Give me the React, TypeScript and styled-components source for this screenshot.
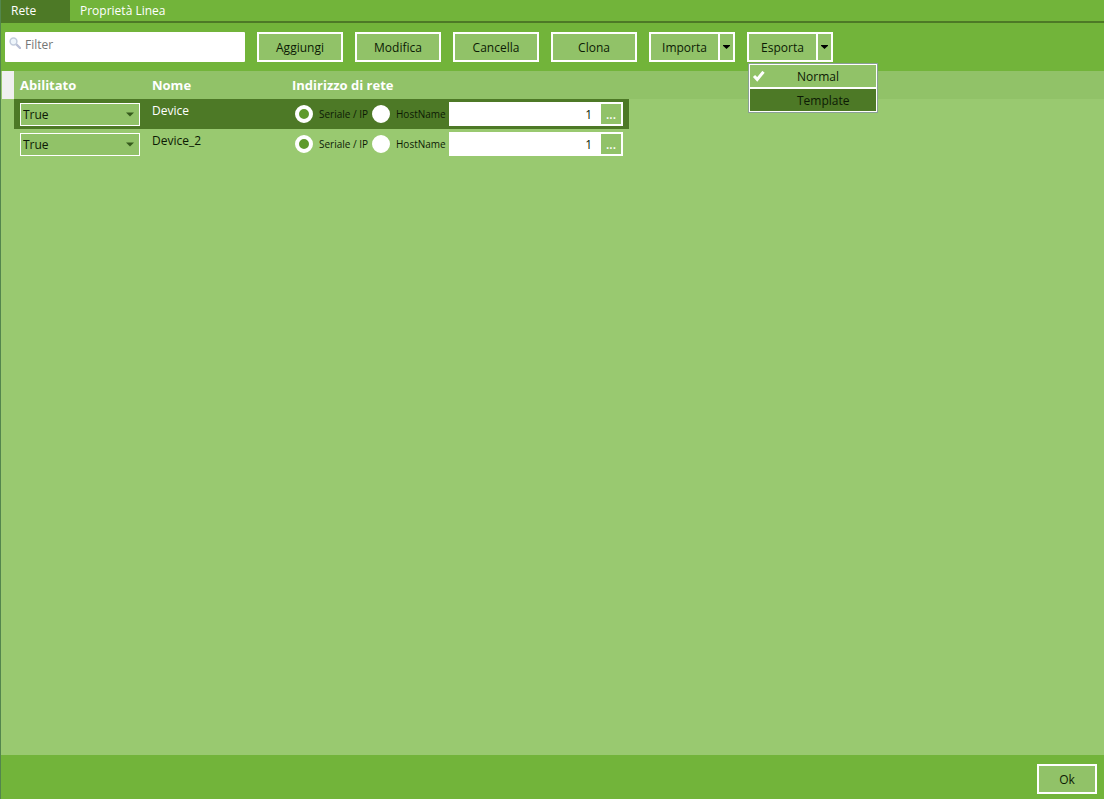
import React, { useState } from "react";
import styled, { createGlobalStyle, css } from "styled-components";

const color = {
  bar: "#72b43a",
  panel: "#99c970",
  control: "#91c268",
  dark: "#4d7926",
  ink: "#0c1a04",
  edge: "#53864d",
};

const GlobalStyle = createGlobalStyle`
  *, *::before, *::after { box-sizing: border-box; }
  html, body, #root { height: 100%; }
  body { margin: 0; }
  body, button, input, select {
    font-family: "Open Sans", "Noto Sans", sans-serif;
    font-size: 12px;
    line-height: 16px;
    color: ${color.ink};
  }
`;

const Window = styled.div`
  display: flex;
  flex-direction: column;
  min-height: 100%;
  border-left: 1px solid ${color.edge};
  background: ${color.panel};
`;

const Tabs = styled.nav`
  display: flex;
  height: 23px;
  background: ${color.bar};
  border-bottom: 2px solid ${color.dark};
`;

const Tab = styled.button<{ $active?: boolean }>`
  border: 0;
  padding: 0 10px;
  min-width: ${(p) => (p.$active ? "69px" : "0")};
  text-align: left;
  color: #fff;
  background: ${(p) => (p.$active ? color.dark : "transparent")};
`;

const Toolbar = styled.div`
  display: flex;
  align-items: center;
  gap: 12px;
  height: 48px;
  padding: 0 4px;
  background: ${color.bar};
`;

const Search = styled.label`
  display: flex;
  align-items: flex-start;
  gap: 4px;
  width: 240px;
  height: 30px;
  padding: 5px 4px;
  border-radius: 1px;
  background: #fff;
`;

const SearchInput = styled.input`
  flex: 1;
  min-width: 0;
  border: 0;
  padding: 0;
  outline: 0;
  background: none;
  &::placeholder { color: #757575; opacity: 1; }
`;

const outlined = css`
  height: 30px;
  border: 2px solid #fff;
  background: ${color.control};
`;

const Button = styled.button<{ $small?: boolean }>`
  ${outlined}
  width: ${(p) => (p.$small ? "60px" : "86px")};
  padding: 2px 0 0;
`;

const SplitButton = styled.div`
  ${outlined}
  position: relative;
  display: flex;
  width: 86px;
`;

const SplitMain = styled.button`
  flex: 1;
  border: 0;
  padding: 2px 0 0;
  background: none;
`;

const SplitArrow = styled.button`
  display: flex;
  align-items: center;
  justify-content: center;
  width: 15px;
  border: 0;
  border-left: 2px solid #fff;
  padding: 0;
  background: none;
`;

const Menu = styled.div`
  position: absolute;
  top: 29px;
  left: -1px;
  z-index: 1;
  width: 130px;
  padding: 1px;
  border: 1px solid #8a9f96;
  background: #fff;
  display: grid;
  gap: 2px;
`;

const MenuItem = styled.button<{ $highlighted?: boolean }>`
  display: grid;
  grid-template-columns: 46px 1fr;
  align-items: center;
  height: 22px;
  border: 0;
  padding: 2px 0 0 1px;
  text-align: left;
  background: ${(p) => (p.$highlighted ? color.dark : color.control)};
`;

const Content = styled.main`
  flex: 1;
  padding-left: 1px;
`;

const Table = styled.table`
  width: 100%;
  table-layout: fixed;
  border-collapse: collapse;
`;

const Column = styled.col<{ $width?: number }>`
  width: ${(p) => (p.$width ? `${p.$width}px` : "auto")};
`;

const HeadCell = styled.th`
  height: 28px;
  padding: 0 6px;
  text-align: left;
  font-size: 13px;
  color: #fff;
  background: ${color.control};
`;

const Corner = styled.td`
  padding: 0;
  background: #f0f0f0;
`;

const Row = styled.tr<{ $selected: boolean }>`
  color: ${(p) => (p.$selected ? "#fff" : color.ink)};
  --row: ${(p) => (p.$selected ? color.dark : "transparent")};
`;

const Cell = styled.td`
  height: 30px;
  padding: 0 6px;
  background: var(--row);
`;

const NameCell = styled(Cell)`
  padding-top: 4px;
  vertical-align: top;
`;

const SelectBox = styled.div`
  position: relative;
  display: flex;
`;

const Select = styled.select`
  appearance: none;
  width: 100%;
  height: 23px;
  border: 1px solid #fff;
  border-radius: 0;
  padding: 1px 2px 0;
  background: ${color.control};
`;

const SelectArrow = styled.svg`
  position: absolute;
  top: 9px;
  right: 6px;
  pointer-events: none;
`;

const Address = styled.div`
  display: flex;
  align-items: center;
  padding-left: 3px;
`;

const Option = styled.label`
  display: flex;
  flex: none;
  align-items: center;
  gap: 6px;
  width: 77px;
  font-size: 10px;
  white-space: nowrap;
  color: ${color.ink};
`;

const Radio = styled.input`
  appearance: none;
  flex: none;
  width: 18px;
  height: 18px;
  margin: 0;
  border: 4px solid #fff;
  border-radius: 50%;
  background: #fff;
  &:checked { background: #5e9a2c; }
`;

const AddressField = styled.div`
  display: flex;
  flex: 1;
  min-width: 0;
  height: 24px;
  background: #fff;
`;

const AddressInput = styled.input`
  flex: 1;
  min-width: 0;
  border: 0;
  padding: 2px 7px 0;
  text-align: right;
  background: none;
`;

const Browse = styled.button`
  width: 24px;
  border: 2px solid #fff;
  padding: 2px 0 0;
  font-weight: 600;
  color: #fff;
  background: ${color.control};
`;

const Footer = styled.footer`
  display: flex;
  align-items: center;
  justify-content: flex-end;
  height: 44px;
  padding: 4px 7px 0;
  background: ${color.bar};
`;

const SearchIcon = () => (
  <svg width="12" height="12" viewBox="0 0 12 12" aria-hidden="true">
    <path d="M7 7 L11 11" stroke="#b9bfd6" strokeWidth="2.4" strokeLinecap="round" />
    <circle cx="4.5" cy="4.5" r="3.4" fill="#eef5fb" stroke="#c3cddd" strokeWidth="1.5" />
  </svg>
);

const Arrow = () => (
  <svg width="7" height="4" viewBox="0 0 7 4" aria-hidden="true">
    <path d="M0 0 H7 V0.8 L3.5 4 L0 0.8 Z" fill="#000" />
  </svg>
);

const Check = () => (
  <svg width="14" height="12" viewBox="0 0 14 12" aria-hidden="true">
    <path d="M3 5 L6.2 8.4 L12.5 0.8" fill="none" stroke="#fff" strokeWidth="3" />
  </svg>
);

const devices = ["Device", "Device_2"];

function DeviceRow({ name, selected }: { name: string; selected: boolean }) {
  return (
    <Row $selected={selected}>
      <td />
      <Cell>
        <SelectBox>
          <Select aria-label={`Abilitato ${name}`} defaultValue="True">
            <option>True</option>
            <option>False</option>
          </Select>
          <SelectArrow width="8" height="5" viewBox="0 0 8 5" aria-hidden="true">
            <path d="M0 0.5 H8 L4 4.5 Z" fill="#365a1c" />
          </SelectArrow>
        </SelectBox>
      </Cell>
      <NameCell>{name}</NameCell>
      <Cell>
        <Address>
          <Option>
            <Radio type="radio" name={`mode-${name}`} defaultChecked />
            Seriale / IP
          </Option>
          <Option>
            <Radio type="radio" name={`mode-${name}`} />
            HostName
          </Option>
          <AddressField>
            <AddressInput aria-label={`Indirizzo di rete ${name}`} defaultValue="1" />
            <Browse>...</Browse>
          </AddressField>
        </Address>
      </Cell>
      <td />
    </Row>
  );
}

export default function App() {
  const [menuOpen, setMenuOpen] = useState(true);
  return (
    <>
      <GlobalStyle />
      <Window>
        <Tabs>
          <Tab $active>Rete</Tab>
          <Tab>Proprietà Linea</Tab>
        </Tabs>
        <Toolbar>
          <Search>
            <SearchIcon />
            <SearchInput placeholder="Filter" aria-label="Filter" />
          </Search>
          <Button>Aggiungi</Button>
          <Button>Modifica</Button>
          <Button>Cancella</Button>
          <Button>Clona</Button>
          <SplitButton>
            <SplitMain>Importa</SplitMain>
            <SplitArrow aria-label="Opzioni Importa"><Arrow /></SplitArrow>
          </SplitButton>
          <SplitButton>
            <SplitMain>Esporta</SplitMain>
            <SplitArrow aria-label="Opzioni Esporta" onClick={() => setMenuOpen(!menuOpen)}>
              <Arrow />
            </SplitArrow>
            {menuOpen && (
              <Menu>
                <MenuItem><Check />Normal</MenuItem>
                <MenuItem $highlighted><span />Template</MenuItem>
              </Menu>
            )}
          </SplitButton>
        </Toolbar>
        <Content>
          <Table>
            <colgroup>
              <Column $width={12} />
              <Column $width={132} />
              <Column $width={140} />
              <Column $width={343} />
              <Column />
            </colgroup>
            <thead>
              <tr>
                <Corner />
                <HeadCell>Abilitato</HeadCell>
                <HeadCell>Nome</HeadCell>
                <HeadCell>Indirizzo di rete</HeadCell>
                <HeadCell as="td" />
              </tr>
            </thead>
            <tbody>
              {devices.map((name, i) => (
                <DeviceRow key={name} name={name} selected={i === 0} />
              ))}
            </tbody>
          </Table>
        </Content>
        <Footer>
          <Button $small>Ok</Button>
        </Footer>
      </Window>
    </>
  );
}
